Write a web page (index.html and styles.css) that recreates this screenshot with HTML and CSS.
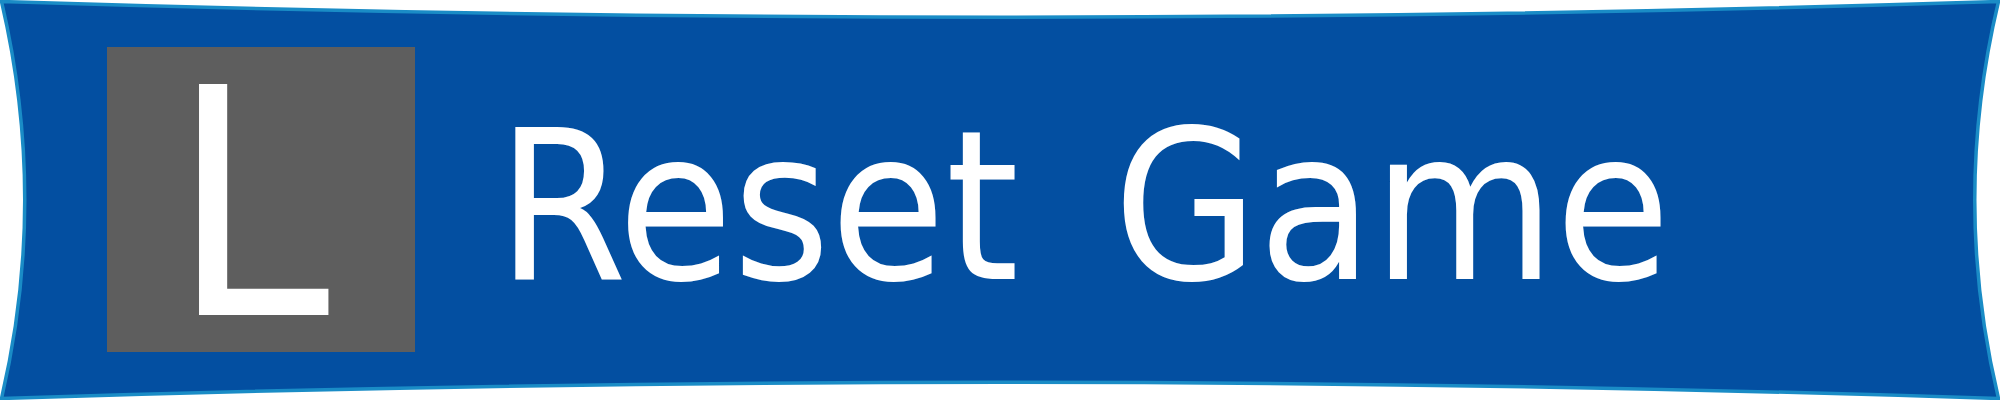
FILE: index.html
```html
<!DOCTYPE html>
<html lang="en">
<head>
<meta charset="utf-8">
<title>Reset Game</title>
<link rel="stylesheet" href="styles.css">
</head>
<body>
<div class="banner">
  <svg class="banner-shape" viewBox="0 0 2000 400" preserveAspectRatio="none" aria-hidden="true">
    <path d="M1.5,1.5 Q1000,33 1998.5,1.5 Q1951,200 1998.5,398.5 Q1000,366 1.5,398.5 Q48,200 1.5,1.5 Z" fill="#034fa1" stroke="#1a8cc6" stroke-width="3.5"/>
  </svg>
  <div class="banner-content">
    <div class="key-icon"><span class="key-letter">L</span></div>
    <div class="label">Reset Game</div>
  </div>
</div>
</body>
</html>
```

FILE: styles.css
```css
html, body {
  margin: 0;
  padding: 0;
  background: #ffffff;
}

.banner {
  position: relative;
  width: 2000px;
  height: 400px;
  overflow: hidden;
}

.banner-shape {
  position: absolute;
  left: 0;
  top: 0;
  width: 2000px;
  height: 400px;
}

.banner-content {
  position: relative;
  display: flex;
  align-items: flex-start;
  padding: 47px 0 0 107px;
  font-family: "DejaVu Sans Condensed", "DejaVu Sans", sans-serif;
  color: #ffffff;
}

.key-icon {
  width: 308px;
  height: 305px;
  background: #5e5e5e;
  box-sizing: border-box;
  padding-left: 64px;
}

.key-letter {
  display: block;
  font-size: 317px;
  line-height: 1;
}

.label {
  margin-left: 82px;
  margin-top: 56px;
  font-size: 208px;
  line-height: 1;
  word-spacing: 35px;
  white-space: nowrap;
}
```
